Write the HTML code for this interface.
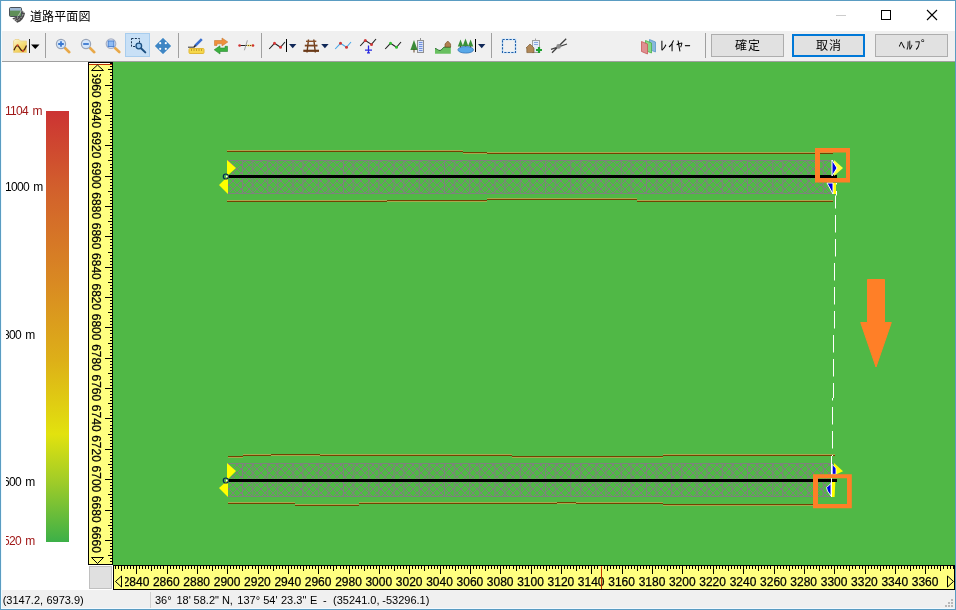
<!DOCTYPE html>
<html lang="ja"><head><meta charset="utf-8"><title>道路平面図</title>
<style>
html,body{margin:0;padding:0}
body{width:956px;height:610px;overflow:hidden;background:#fff;position:relative;font-family:"Liberation Sans","Noto Sans CJK JP",sans-serif;font-size:12px;color:#000}
.lg,#st1,#st2,#title,#layer,.btn{will-change:transform}
svg{will-change:transform}
#win{position:absolute;left:0;top:0;width:954px;height:608px;border:1px solid #5a9cc2;background:#fff;overflow:hidden}
#title{position:absolute;left:29.5px;top:8px;height:18px;line-height:18px;font-size:12px;letter-spacing:0.1px;white-space:nowrap}
#tb{position:absolute;left:1px;top:31px;width:954px;height:30px;background:#f0f0f0;border-bottom:1px solid #a0a0a0}
.btn{position:absolute;top:34px;width:71px;height:21px;border:1px solid #adadad;background:#e1e1e1;text-align:center;line-height:23px;font-size:12px;white-space:nowrap;letter-spacing:1px;text-indent:1px}
.hk{font-family:"Liberation Sans","IPAGothic",sans-serif;font-size:13px;letter-spacing:1.3px;position:relative;top:-1px;left:1.5px}
.btn.def{border:2px solid #0078d7;width:69px;height:19px;line-height:21px}
#layer{position:absolute;left:660px;top:37px;height:18px;line-height:18px;font-size:14px;letter-spacing:1px;white-space:nowrap;font-family:"Liberation Sans","IPAGothic",sans-serif}
#status{position:absolute;left:1px;top:590px;width:954px;height:19px;background:#f0f0f0}
#st1{position:absolute;left:3px;top:592px;line-height:16px;height:16px;width:140px;font-size:11px;white-space:nowrap}
#st1 span,#st2 span{position:absolute;top:0}
#st2{position:absolute;left:155px;top:592px;line-height:16px;height:16px;width:300px;font-size:11px;white-space:nowrap}
.lg{position:absolute;left:6px;width:40px;height:14px;overflow:hidden;font-size:12px;line-height:14px;white-space:nowrap;letter-spacing:-0.7px;word-spacing:1.8px}
.lg span{position:relative;left:-1px}
.red{color:#a01818}
#bar{position:absolute;left:46px;top:111px;width:23px;height:431px;background:linear-gradient(to bottom,#cc3333 0%,#d2602c 18%,#d98a22 40%,#ddb018 58%,#e2e20e 75%,#a0cc28 86%,#3cb048 100%)}
svg{position:absolute;left:0;top:0}
svg text{font-family:"Liberation Sans",sans-serif;font-size:12px;fill:#000}
</style></head>
<body>
<div id="win"></div>
<div id="title">道路平面図</div>
<div id="tb"></div>
<div class="btn" style="left:711px">確定</div>
<div class="btn def" style="left:792px">取消</div>
<div class="btn" style="left:875px"><span class="hk">ﾍﾙﾌﾟ</span></div>
<div id="layer">ﾚｲﾔｰ</div>
<div id="bar"></div>
<div class="lg red" style="top:104px"><span>1104 m</span></div>
<div class="lg" style="top:180px"><span>1000 m</span></div>
<div class="lg" style="top:328px"><span style="left:-3px">800 m</span></div>
<div class="lg" style="top:475px"><span style="left:-3px">600 m</span></div>
<div class="lg red" style="top:534px"><span style="left:-3px">520 m</span></div>
<div id="status"></div>
<div id="st1"><span style="left:-0.3px">(3147.2,</span> <span style="left:43.4px">6973.9)</span></div>
<div id="st2"><span style="left:-0.1px">36°</span> <span style="left:21.4px">18'</span> <span style="left:38.6px">58.2&quot;</span> <span style="left:66.9px">N,</span> <span style="left:82.3px">137°</span> <span style="left:108.2px">54'</span> <span style="left:126.0px">23.3&quot;</span> <span style="left:155.1px">E</span> <span style="left:168.1px">-</span> <span style="left:178.0px">(35241.0,</span> <span style="left:227.3px">-53296.1)</span></div>
<svg width="956" height="610" viewBox="0 0 956 610">
<defs>
<pattern id="hatch" x="237" y="161" width="8" height="8" patternUnits="userSpaceOnUse">
<path d="M0 0L8 8M8 0L0 8" stroke="#7e837c" stroke-width="1" fill="none" shape-rendering="auto"/>
</pattern>
<pattern id="vl" x="242" y="0" width="25.25" height="40" patternUnits="userSpaceOnUse">
<rect x="0" y="0" width="1" height="40" fill="#7e837c"/><rect x="10" y="0" width="1" height="40" fill="#7e837c"/>
</pattern>
<clipPath id="hclip"><rect x="125" y="566" width="821" height="23"/></clipPath>
<clipPath id="vclip"><rect x="89" y="74" width="23" height="482"/></clipPath>
</defs>
<!-- map -->
<rect x="113" y="62" width="842" height="503" fill="#50b846" shape-rendering="crispEdges"/>
<!-- roads -->
<g shape-rendering="crispEdges">
<rect x="228" y="160" width="605" height="34" fill="url(#hatch)"/>
<rect x="228" y="160" width="605" height="34" fill="url(#vl)"/>
<rect x="228" y="160" width="605" height="1" fill="#7e837c"/>
<rect x="228" y="193" width="605" height="1" fill="#7e837c"/>
<rect x="228" y="463" width="603" height="34" fill="url(#hatch)"/>
<rect x="228" y="463" width="603" height="34" fill="url(#vl)"/>
<rect x="228" y="463" width="605" height="1" fill="#7e837c"/>
<rect x="228" y="496" width="605" height="1" fill="#7e837c"/>
<rect x="229" y="175" width="608" height="3" fill="#000"/>
<rect x="229" y="479" width="608" height="3" fill="#000"/>
<path d="M227 150.5H463M463 153.5H487M487 152.5H833M227 200.5H387M387 201.5H487M487 198.5H637M637 200.5H833M228 457.5H243M243 454.5H271M271 455.5H320M320 454.5H512M512 457.5H663M663 454.5H835M228 502.5H257M257 502.5H295M295 504.5H359M359 502.5H557M557 503.5H576M576 502.5H663M663 505.5H833" stroke="#a8a84e" stroke-width="1" fill="none"/>
<path d="M227 151.5H463M463 152.5H487M487 153.5H833M227 201.5H387M387 200.5H487M487 199.5H637M637 201.5H833M228 456.5H243M243 455.5H271M271 454.5H320M320 455.5H512M512 456.5H663M663 455.5H835M228 503.5H257M257 503.5H295M295 505.5H359M359 503.5H557M557 502.5H576M576 503.5H663M663 504.5H833" stroke="#744200" stroke-width="1" fill="none"/>

</g>
<!-- end markers left -->
<path d="M227 160L236 168L227 176ZM228 176L219 185L228 194Z" fill="#ffff00"/>
<path d="M227 463L236 471L227 480ZM228 480L219 488L228 497Z" fill="#ffff00"/>
<circle cx="225.800" cy="176.500" r="2.500" fill="none" stroke="#002858" stroke-width="1.200"/><circle cx="226.800" cy="176.300" r="0.900" fill="#fff"/>
<circle cx="225.800" cy="480.500" r="2.500" fill="none" stroke="#002858" stroke-width="1.200"/><circle cx="226.800" cy="480.300" r="0.900" fill="#fff"/>
<!-- end markers right -->
<path d="M834 160L843 168L834 176Z" fill="#ffff40"/>
<path d="M832 160L837 168L832 176Z" fill="#0000e0" stroke="#fff" stroke-width="1"/>
<path d="M833 183H836V194H833Z" fill="#ffff00"/>
<path d="M827 183H833V194Z" fill="#0000e0" stroke="#fff" stroke-width="1"/>
<path d="M834 463L843 471.300L836.500 474.300H834Z" fill="#ffff00"/>
<path d="M832.300 464.500L836 468.200V474.300H832.300Z" fill="#0000e0" stroke="#fff" stroke-width="0.800"/>
<path d="M832 482H835.300L834.600 497H832Z" fill="#ffff00"/>
<path d="M831 483.500L826.500 487.500L827.500 491L831 496Z" fill="#0000e0" stroke="#fff" stroke-width="0.900"/>
<!-- dashed line -->
<g fill="#fff" shape-rendering="auto"><rect x="836" y="183" width="1" height="1.5"/><rect x="836" y="191" width="1" height="4.5"/><rect x="835" y="195.5" width="1" height="13"/><rect x="835" y="215" width="1" height="17.5"/><rect x="835" y="239" width="1" height="17.5"/><rect x="834" y="263" width="1" height="17.5"/><rect x="834" y="287" width="1" height="17.5"/><rect x="834" y="311" width="1" height="17.5"/><rect x="833" y="335" width="1" height="17.5"/><rect x="833" y="359" width="1" height="17.5"/><rect x="833" y="383" width="1" height="15"/><rect x="832" y="398" width="1" height="2.5"/><rect x="832" y="407" width="1" height="17.5"/><rect x="832" y="431" width="1" height="17.5"/></g>
<path d="M832.5 455V456M831.500 456V497" stroke="#fff" stroke-width="1" fill="none" shape-rendering="crispEdges"/>
<!-- orange boxes & arrow -->
<path d="M815 148H850V182.500H815ZM820 152.500H846V178H820Z" fill="#ff7f27" fill-rule="evenodd"/>
<path d="M813 474.300H851.800V508.200H813ZM818 478.300H847V504H818Z" fill="#ff7f27" fill-rule="evenodd"/>
<path d="M867.500 279.500H884.500V322.500H891.300L876 367L860.700 322.500H867.500Z" fill="#ff7f27" stroke="#ff7f27" stroke-width="1" stroke-linejoin="round"/>
<!-- vertical ruler -->
<g shape-rendering="crispEdges">
<rect x="88.5" y="62.5" width="24" height="502" fill="#ffff80" stroke="#000" stroke-width="1"/>
<path d="M112 63h-2M112 66h-2M112 69h-4M112 72h-2M112 75h-2M112 79h-2M112 82h-2M112 85h-7M112 88h-2M112 91h-2M112 94h-2M112 97h-2M112 100h-4M112 103h-2M112 106h-2M112 109h-2M112 112h-2M112 115h-7M112 118h-2M112 121h-2M112 124h-2M112 127h-2M112 130h-4M112 133h-2M112 136h-2M112 139h-2M112 142h-2M112 145h-7M112 148h-2M112 151h-2M112 154h-2M112 157h-2M112 160h-4M112 164h-2M112 167h-2M112 170h-2M112 173h-2M112 176h-7M112 179h-2M112 182h-2M112 185h-2M112 188h-2M112 191h-4M112 194h-2M112 197h-2M112 200h-2M112 203h-2M112 206h-7M112 209h-2M112 212h-2M112 215h-2M112 218h-2M112 221h-4M112 224h-2M112 227h-2M112 230h-2M112 233h-2M112 236h-7M112 239h-2M112 242h-2M112 245h-2M112 248h-2M112 252h-4M112 255h-2M112 258h-2M112 261h-2M112 264h-2M112 267h-7M112 270h-2M112 273h-2M112 276h-2M112 279h-2M112 282h-4M112 285h-2M112 288h-2M112 291h-2M112 294h-2M112 297h-7M112 300h-2M112 303h-2M112 306h-2M112 309h-2M112 312h-4M112 315h-2M112 318h-2M112 321h-2M112 324h-2M112 327h-7M112 330h-2M112 333h-2M112 337h-2M112 340h-2M112 343h-4M112 346h-2M112 349h-2M112 352h-2M112 355h-2M112 358h-7M112 361h-2M112 364h-2M112 367h-2M112 370h-2M112 373h-4M112 376h-2M112 379h-2M112 382h-2M112 385h-2M112 388h-7M112 391h-2M112 394h-2M112 397h-2M112 400h-2M112 403h-4M112 406h-2M112 409h-2M112 412h-2M112 415h-2M112 418h-7M112 421h-2M112 425h-2M112 428h-2M112 431h-2M112 434h-4M112 437h-2M112 440h-2M112 443h-2M112 446h-2M112 449h-7M112 452h-2M112 455h-2M112 458h-2M112 461h-2M112 464h-4M112 467h-2M112 470h-2M112 473h-2M112 476h-2M112 479h-7M112 482h-2M112 485h-2M112 488h-2M112 491h-2M112 494h-4M112 497h-2M112 500h-2M112 503h-2M112 506h-2M112 510h-7M112 513h-2M112 516h-2M112 519h-2M112 522h-2M112 525h-4M112 528h-2M112 531h-2M112 534h-2M112 537h-2M112 540h-7M112 543h-2M112 546h-2M112 549h-2M112 552h-2M112 555h-4M112 558h-2M112 561h-2" transform="translate(0 0.5)" stroke="#000" stroke-width="1" fill="none"/>
<rect x="89" y="63" width="21" height="1" fill="#ffffe4"/><rect x="89" y="64" width="23" height="1" fill="#c03000"/>
<!-- horizontal ruler -->
<rect x="113.5" y="565.5" width="841" height="24" fill="#ffff80" stroke="#000" stroke-width="1"/>
<path d="M115 566v3M118 566v3M121 566v5M124 566v3M127 566v3M130 566v3M133 566v3M136 566v8M139 566v3M142 566v3M145 566v3M148 566v3M151 566v5M154 566v3M157 566v3M160 566v3M163 566v3M167 566v8M170 566v3M173 566v3M176 566v3M179 566v3M182 566v5M185 566v3M188 566v3M191 566v3M194 566v3M197 566v8M200 566v3M203 566v3M206 566v3M209 566v3M212 566v5M215 566v3M218 566v3M221 566v3M224 566v3M227 566v8M230 566v3M233 566v3M236 566v3M239 566v3M242 566v5M245 566v3M248 566v3M252 566v3M255 566v3M258 566v8M261 566v3M264 566v3M267 566v3M270 566v3M273 566v5M276 566v3M279 566v3M282 566v3M285 566v3M288 566v8M291 566v3M294 566v3M297 566v3M300 566v3M303 566v5M306 566v3M309 566v3M312 566v3M315 566v3M318 566v8M321 566v3M324 566v3M327 566v3M330 566v3M333 566v5M336 566v3M340 566v3M343 566v3M346 566v3M349 566v8M352 566v3M355 566v3M358 566v3M361 566v3M364 566v5M367 566v3M370 566v3M373 566v3M376 566v3M379 566v8M382 566v3M385 566v3M388 566v3M391 566v3M394 566v5M397 566v3M400 566v3M403 566v3M406 566v3M409 566v8M412 566v3M415 566v3M418 566v3M421 566v3M424 566v5M428 566v3M431 566v3M434 566v3M437 566v3M440 566v8M443 566v3M446 566v3M449 566v3M452 566v3M455 566v5M458 566v3M461 566v3M464 566v3M467 566v3M470 566v8M473 566v3M476 566v3M479 566v3M482 566v3M485 566v5M488 566v3M491 566v3M494 566v3M497 566v3M500 566v8M503 566v3M506 566v3M509 566v3M513 566v3M516 566v5M519 566v3M522 566v3M525 566v3M528 566v3M531 566v8M534 566v3M537 566v3M540 566v3M543 566v3M546 566v5M549 566v3M552 566v3M555 566v3M558 566v3M561 566v8M564 566v3M567 566v3M570 566v3M573 566v3M576 566v5M579 566v3M582 566v3M585 566v3M588 566v3M591 566v8M594 566v3M597 566v3M601 566v3M604 566v3M607 566v5M610 566v3M613 566v3M616 566v3M619 566v3M622 566v8M625 566v3M628 566v3M631 566v3M634 566v3M637 566v5M640 566v3M643 566v3M646 566v3M649 566v3M652 566v8M655 566v3M658 566v3M661 566v3M664 566v3M667 566v5M670 566v3M673 566v3M676 566v3M679 566v3M682 566v8M686 566v3M689 566v3M692 566v3M695 566v3M698 566v5M701 566v3M704 566v3M707 566v3M710 566v3M713 566v8M716 566v3M719 566v3M722 566v3M725 566v3M728 566v5M731 566v3M734 566v3M737 566v3M740 566v3M743 566v8M746 566v3M749 566v3M752 566v3M755 566v3M758 566v5M761 566v3M764 566v3M767 566v3M770 566v3M774 566v8M777 566v3M780 566v3M783 566v3M786 566v3M789 566v5M792 566v3M795 566v3M798 566v3M801 566v3M804 566v8M807 566v3M810 566v3M813 566v3M816 566v3M819 566v5M822 566v3M825 566v3M828 566v3M831 566v3M834 566v8M837 566v3M840 566v3M843 566v3M846 566v3M849 566v5M852 566v3M855 566v3M859 566v3M862 566v3M865 566v8M868 566v3M871 566v3M874 566v3M877 566v3M880 566v5M883 566v3M886 566v3M889 566v3M892 566v3M895 566v8M898 566v3M901 566v3M904 566v3M907 566v3M910 566v5M913 566v3M916 566v3M919 566v3M922 566v3M925 566v8M928 566v3M931 566v3M934 566v3M937 566v3M940 566v5M943 566v3M947 566v3M950 566v3M953 566v3" transform="translate(0.5 0)" stroke="#000" stroke-width="1" fill="none"/>
<rect x="89.5" y="566.5" width="22" height="22" fill="#e0e0e0" stroke="#c0c0c0"/>
</g>
<g clip-path="url(#hclip)" stroke="#000" stroke-width="0.25"><text x="136.0" y="585.5" text-anchor="middle">2840</text><text x="166.3" y="585.5" text-anchor="middle">2860</text><text x="196.7" y="585.5" text-anchor="middle">2880</text><text x="227.1" y="585.5" text-anchor="middle">2900</text><text x="257.4" y="585.5" text-anchor="middle">2920</text><text x="287.8" y="585.5" text-anchor="middle">2940</text><text x="318.1" y="585.5" text-anchor="middle">2960</text><text x="348.5" y="585.5" text-anchor="middle">2980</text><text x="378.8" y="585.5" text-anchor="middle">3000</text><text x="409.2" y="585.5" text-anchor="middle">3020</text><text x="439.5" y="585.5" text-anchor="middle">3040</text><text x="469.9" y="585.5" text-anchor="middle">3060</text><text x="500.2" y="585.5" text-anchor="middle">3080</text><text x="530.5" y="585.5" text-anchor="middle">3100</text><text x="560.9" y="585.5" text-anchor="middle">3120</text><text x="591.2" y="585.5" text-anchor="middle">3140</text><text x="621.6" y="585.5" text-anchor="middle">3160</text><text x="652.0" y="585.5" text-anchor="middle">3180</text><text x="682.3" y="585.5" text-anchor="middle">3200</text><text x="712.6" y="585.5" text-anchor="middle">3220</text><text x="743.0" y="585.5" text-anchor="middle">3240</text><text x="773.4" y="585.5" text-anchor="middle">3260</text><text x="803.7" y="585.5" text-anchor="middle">3280</text><text x="834.1" y="585.5" text-anchor="middle">3300</text><text x="864.4" y="585.5" text-anchor="middle">3320</text><text x="894.8" y="585.5" text-anchor="middle">3340</text><text x="925.1" y="585.5" text-anchor="middle">3360</text></g>
<g clip-path="url(#vclip)" stroke="#000" stroke-width="0.25"><text transform="translate(91.5 84.3) rotate(90)" x="0" y="0" text-anchor="middle">6960</text><text transform="translate(91.5 114.7) rotate(90)" x="0" y="0" text-anchor="middle">6940</text><text transform="translate(91.5 145.0) rotate(90)" x="0" y="0" text-anchor="middle">6920</text><text transform="translate(91.5 175.4) rotate(90)" x="0" y="0" text-anchor="middle">6900</text><text transform="translate(91.5 205.7) rotate(90)" x="0" y="0" text-anchor="middle">6880</text><text transform="translate(91.5 236.1) rotate(90)" x="0" y="0" text-anchor="middle">6860</text><text transform="translate(91.5 266.4) rotate(90)" x="0" y="0" text-anchor="middle">6840</text><text transform="translate(91.5 296.8) rotate(90)" x="0" y="0" text-anchor="middle">6820</text><text transform="translate(91.5 327.1) rotate(90)" x="0" y="0" text-anchor="middle">6800</text><text transform="translate(91.5 357.5) rotate(90)" x="0" y="0" text-anchor="middle">6780</text><text transform="translate(91.5 387.8) rotate(90)" x="0" y="0" text-anchor="middle">6760</text><text transform="translate(91.5 418.2) rotate(90)" x="0" y="0" text-anchor="middle">6740</text><text transform="translate(91.5 448.5) rotate(90)" x="0" y="0" text-anchor="middle">6720</text><text transform="translate(91.5 478.9) rotate(90)" x="0" y="0" text-anchor="middle">6700</text><text transform="translate(91.5 509.2) rotate(90)" x="0" y="0" text-anchor="middle">6680</text><text transform="translate(91.5 539.5) rotate(90)" x="0" y="0" text-anchor="middle">6660</text></g>
<rect x="601" y="566" width="1" height="23" fill="#c03000" shape-rendering="crispEdges"/>
<path d="M121.5 576V587L115.5 581.5Z M947.5 576V587L953.5 581.5Z M91.5 70.500H103.500L97.500 65Z M91.500 557.500H103.500L97.500 563.500Z" fill="none" stroke="#000" stroke-width="1"/>
<!-- status divider & grip -->
<rect x="150" y="592" width="1" height="16" fill="#d0d0d0" shape-rendering="crispEdges"/>
<rect x="1" y="1" width="1" height="608" fill="#eefaff" shape-rendering="crispEdges"/><rect x="1" y="608" width="953" height="1" fill="#f4faff" shape-rendering="crispEdges"/>
<!-- window controls -->
<g shape-rendering="crispEdges" fill="none" stroke="#000" stroke-width="1">
<path d="M836 15.5H846" stroke="#ccc"/>
<rect x="881.5" y="10.5" width="9" height="9"/>
</g>
<path d="M927 10L937 20M937 10L927 20" stroke="#000" stroke-width="1.1" fill="none"/>
<!-- toolbar separators -->
<g shape-rendering="crispEdges" fill="#a0a0a0">
<rect x="45" y="33" width="1" height="25"/><rect x="178" y="33" width="1" height="25"/><rect x="261" y="33" width="1" height="25"/><rect x="491" y="33" width="1" height="25"/><rect x="705" y="33" width="1" height="25"/>
</g>
<!-- title icon -->
<g>
<path d="M12.3 18.300C16.500 17.500 19.500 14.500 21.300 9.600L25 13.200C24.200 18 21.500 21.300 17.200 22.800Z" fill="#4a4a4a"/>
<path d="M14 19.600C18.200 18.400 20.800 15.400 22.500 10.800M15.600 21.200C19.800 19.800 22.500 16.800 23.800 12" stroke="#e6e6e6" stroke-width="0.700" stroke-dasharray="1.800 1.200" fill="none"/>
<rect x="9.500" y="7.500" width="12" height="9" rx="1.200" fill="#5f8f58" stroke="#4a5058" stroke-width="1"/>
<rect x="10" y="8" width="11" height="2.600" fill="#9fb8d4"/>
<path d="M17.500 16.500C19 15 20.300 13 21.300 10.500" stroke="#d8d8d8" stroke-width="0.800" fill="none"/>
</g>
<!-- folder/terrain icon -->
<g>
<linearGradient id="fg" x1="0" y1="0" x2="0.6" y2="1"><stop offset="0" stop-color="#fbf4d2"/><stop offset="0.5" stop-color="#f6e080"/><stop offset="1" stop-color="#efc850"/></linearGradient>
<path d="M13.5 41L15 39.500H19L20.500 41H26.500V52.500H13.500Z" fill="url(#fg)" stroke="#ead28a" stroke-width="0.800"/>
<path d="M14 50.300C15.500 46.500 17 44.300 18.500 46.300S21.500 51.800 23.500 50.500 25.500 47 26.500 45.500" stroke="#4a2410" stroke-width="1.300" fill="none"/>
<circle cx="17.600" cy="45.400" r="1.100" fill="#d04828"/><circle cx="23" cy="50.900" r="1.100" fill="#d04828"/>
<rect x="29" y="39" width="1" height="14" fill="#222" shape-rendering="crispEdges"/>
<path d="M31 44.500H39.500L35.300 49Z" fill="#000"/>
</g>
<!-- zoom in -->
<g>
<path d="M65 48L69.3 52.2" stroke="#e8a848" stroke-width="2.6" stroke-linecap="round"/>
<circle cx="61" cy="44" r="4.6" fill="#d4e6fa" stroke="#98a4b8" stroke-width="1.2"/>
<path d="M58.2 44H63.8M61 41.2V46.8" stroke="#3a78d0" stroke-width="1.8"/>
</g>
<!-- zoom out -->
<g>
<path d="M90 48L94.3 52.2" stroke="#e8a848" stroke-width="2.6" stroke-linecap="round"/>
<circle cx="86" cy="44" r="4.6" fill="#d4e6fa" stroke="#98a4b8" stroke-width="1.2"/>
<path d="M83.2 44H88.8" stroke="#3a78d0" stroke-width="1.8"/>
</g>
<!-- zoom window -->
<g>
<path d="M115 48L119.3 52" stroke="#e8a848" stroke-width="2.6" stroke-linecap="round"/>
<circle cx="111" cy="43.7" r="4.8" fill="#dfe8f6" stroke="#a8b0c4" stroke-width="1.2"/>
<rect x="108.2" y="41" width="5.6" height="5.6" fill="#8fbcf4" stroke="#4a80d0" stroke-width="1"/>
</g>
<!-- selected zoom-rect -->
<g>
<rect x="125.5" y="33.5" width="24" height="23" fill="#c8e0f6" stroke="#a8cdee" stroke-width="1" shape-rendering="crispEdges"/>
<path d="M131.5 38.5H139.5V46.5H131.5Z" fill="none" stroke="#16304e" stroke-width="1" stroke-dasharray="2 1.4"/>
<path d="M141 48.3L145.3 52.4" stroke="#1c4f80" stroke-width="2" stroke-linecap="round"/>
<circle cx="138.8" cy="46" r="2.8" fill="#9cc8f0" stroke="#1c4f80" stroke-width="1.3"/>
</g>
<!-- pan -->
<g>
<path d="M163 38L171 46L163 54L155 46Z" fill="#3f86c4"/>
<path d="M163 38L171 46L163 54L155 46Z" fill="none" stroke="#6aa4d6" stroke-width="0.6"/>
<circle cx="160.2" cy="43.2" r="1.1" fill="#fff"/><circle cx="165.8" cy="43.2" r="1.1" fill="#fff"/><circle cx="160.2" cy="48.8" r="1.1" fill="#fff"/><circle cx="165.8" cy="48.8" r="1.1" fill="#fff"/>
</g>
<!-- pencil ruler -->
<g>
<rect x="189" y="48.5" width="15" height="5" rx="1" fill="#f6d84a" stroke="#e0b838" stroke-width="1"/>
<path d="M191.5 49V51M194 49V51M196.500 49V51M199 49V51M201.500 49V51" stroke="#b89020" stroke-width="0.8"/>
<path d="M188 47.2H194.500" stroke="#333" stroke-width="1"/>
<path d="M195.300 45.700L201.800 39.200" stroke="#3a70d0" stroke-width="2.6"/>
<path d="M194 47L195.600 45.400" stroke="#222" stroke-width="1.6"/>
</g>
<!-- swap arrows -->
<g>
<path d="M214.500 40.500H222V38L227.800 42L222 46V43.800H217V45.500H214.500Z" fill="#f0903c" stroke="#c87830" stroke-width="0.6"/>
<path d="M227.500 51.500H220V54L214.200 49.800L220 45.800V48H225V46.300H227.500Z" fill="#3cb040" stroke="#2a8a30" stroke-width="0.6"/>
</g>
<!-- line w dots -->
<g>
<path d="M239.500 45.500H247" stroke="#222" stroke-width="1"/>
<path d="M247 45.500H253" stroke="#e8e060" stroke-width="1.6"/>
<path d="M248 45.500H252.500" stroke="#804020" stroke-width="1" stroke-dasharray="1 1"/>
<path d="M244.400 50.300L247.400 40.300" stroke="#a0a0a0" stroke-width="1"/>
<circle cx="239.600" cy="45.500" r="1.300" fill="#d03030"/><circle cx="253" cy="45.500" r="1.300" fill="#d03030"/>
</g>
<!-- polyline black w dropdown -->
<g>
<path d="M269.200 49L274.500 43.300L280.500 47.300L285 42" stroke="#222" stroke-width="1.1" fill="none"/>
<circle cx="274.500" cy="43.300" r="1.500" fill="#d83838"/><circle cx="280.500" cy="47.300" r="1.500" fill="#d83838"/>
<rect x="286" y="39" width="1" height="13" fill="#000" shape-rendering="crispEdges"/>
<path d="M289 44H296.400L292.700 48.200Z" fill="#102858"/>
</g>
<!-- rail -->
<g>
<path d="M308.500 39.500L307 52.500M313.800 39.500L315.300 52.500" stroke="#6a3a18" stroke-width="1.4" fill="none"/>
<path d="M306 41.300H316.300" stroke="#8a5028" stroke-width="1.4"/>
<path d="M304.800 45.600H317.500" stroke="#7a4420" stroke-width="1.800"/>
<path d="M303.300 50.800H319" stroke="#6a3a18" stroke-width="2.200"/>
<path d="M321.200 44H328.600L324.900 48.200Z" fill="#102858"/>
</g>
<!-- blue polyline -->
<g>
<path d="M335.200 49L340.500 43.300L346.500 47.300L351 42" stroke="#48a8e8" stroke-width="1.1" fill="none"/>
<circle cx="340.500" cy="43.300" r="1.500" fill="#d03838"/><circle cx="346.500" cy="47.300" r="1.500" fill="#d03838"/>
</g>
<!-- plane polyline -->
<g>
<path d="M360.200 46L365.300 40.500L371.500 44.400L376 39" stroke="#222" stroke-width="1.1" fill="none"/>
<circle cx="365.300" cy="40.500" r="1.500" fill="#d03838"/><circle cx="371.500" cy="44.400" r="1.500" fill="#d03838"/>
<path d="M368.500 45.500V53M365 50.200H372M367 52.800H370" stroke="#2828e0" stroke-width="1.300" fill="none"/>
</g>
<!-- green polyline -->
<g>
<path d="M385.200 49L390.500 43.300L396.500 47.300L401 42" stroke="#222" stroke-width="1.100" fill="none"/>
<circle cx="390.500" cy="43.300" r="1.500" fill="#30c030"/><circle cx="396.500" cy="47.300" r="1.500" fill="#30c030"/>
</g>
<!-- tree + building -->
<g>
<rect x="417.500" y="40.500" width="6" height="12" fill="#d8e4f8" stroke="#909090" stroke-width="1"/>
<path d="M419 42.500H422.500M419 44.500H422.500M419 46.500H422.500M419 48.500H422.500M419 50.500H422.500" stroke="#7090e0" stroke-width="1"/>
<path d="M420.500 38V40" stroke="#909090" stroke-width="1"/>
<path d="M414 40L417.600 50H410.400Z" fill="#3a8a38"/>
<rect x="413.500" y="49" width="1" height="3.500" fill="#604020"/>
</g>
<!-- hill + house -->
<g>
<path d="M435 48.500C437 48.500 438 50.500 440 50.500S442.500 47 445 47H450.800V53.700H435Z" fill="#68c060"/>
<path d="M435 48.500C437 48.500 438 50.500 440 50.500S442.500 47 445 47H450.800" stroke="#2a7030" stroke-width="1" fill="none"/>
<path d="M445 44L447.800 41L450.600 44V47H445Z" fill="#b08050" stroke="#704820" stroke-width="0.600"/>
</g>
<!-- trees + pond -->
<g>
<path d="M460.500 39.500L463.200 46.500H457.800ZM465.500 38.500L468.300 46H462.700ZM470.600 39.500L473.300 46.500H467.900Z" fill="#3a9038"/>
<path d="M460.500 46V48M465.500 46V48M470.600 46V48" stroke="#604020" stroke-width="1"/>
<ellipse cx="465.700" cy="49.800" rx="7.800" ry="3.300" fill="#58a8e8" stroke="#3878b8" stroke-width="0.800"/>
<rect x="475" y="39" width="1" height="13" fill="#000" shape-rendering="crispEdges"/>
<path d="M478 44H485.400L481.700 48.200Z" fill="#102858"/>
</g>
<!-- dashed rect -->
<g>
<rect x="502.500" y="39.500" width="13" height="13" fill="none" stroke="#d4e8fa" stroke-width="2"/><rect x="502.500" y="39.500" width="13" height="13" fill="none" stroke="#1f5fa8" stroke-width="1.100" stroke-dasharray="2.200 1.300"/>
</g>
<!-- house plus -->
<g>
<rect x="532.500" y="40.500" width="7" height="12" fill="#e4ecf8" stroke="#a0a0a0" stroke-width="1"/>
<path d="M534 42.500H538M534 44.500H538" stroke="#88a8e0" stroke-width="1"/>
<path d="M535.500 38.500V40" stroke="#a0a0a0" stroke-width="1"/>
<path d="M526 48L530 44L534 48V52.600H526.800V48Z" fill="#b08858" stroke="#705028" stroke-width="0.600"/>
<path d="M539 47V53M536 50H542" stroke="#20a030" stroke-width="2.200"/>
</g>
<!-- crossing lines -->
<g>
<path d="M551 49.300L567 44M552 52.800L566.200 38.700" stroke="#404040" stroke-width="1.300" fill="none"/>
<circle cx="558.600" cy="46.400" r="2.300" fill="#8c8c8c"/>
</g>
<!-- layers -->
<g>
<path d="M649.500 39.500L655.500 42V52L649.500 49.500Z" fill="#88b8dc" stroke="#5898c8" stroke-width="0.800"/>
<path d="M645.500 40.500L651.500 43V53L645.500 50.500Z" fill="#88d888" stroke="#48b048" stroke-width="0.800"/>
<path d="M641.500 41.500L647.500 44V54L641.500 51.500Z" fill="#e09090" stroke="#c85858" stroke-width="0.800"/>
</g>
<!-- size grip -->
<g fill="#b8b8b8" shape-rendering="crispEdges">
<rect x="951" y="599" width="2" height="2"/><rect x="948" y="602" width="2" height="2"/><rect x="951" y="602" width="2" height="2"/><rect x="945" y="605" width="2" height="2"/><rect x="948" y="605" width="2" height="2"/><rect x="951" y="605" width="2" height="2"/>
</g>

</svg>
</body></html>
